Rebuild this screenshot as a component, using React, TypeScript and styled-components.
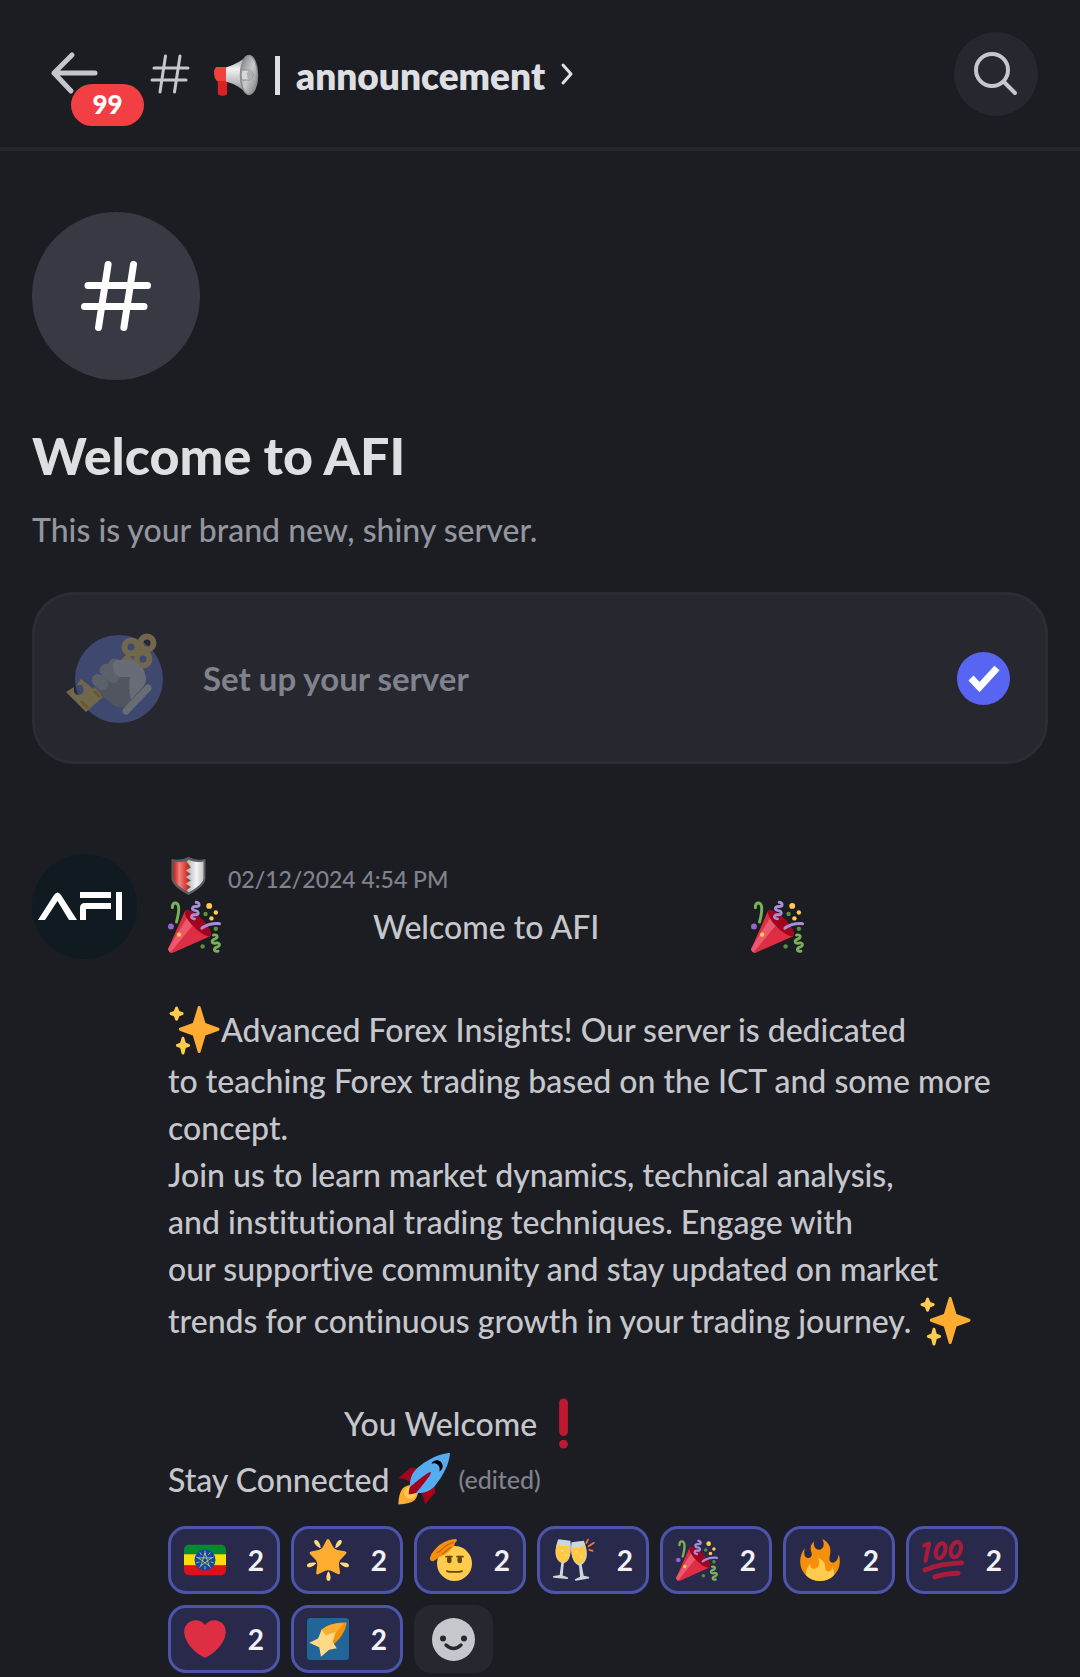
import React from "react";
import styled, { createGlobalStyle } from "styled-components";

const color = {
  page: "#1c1d22",
  raised: "#27282f",
  line: "#25262c",
  strong: "#dedfe3",
  text: "#c6c7cd",
  muted: "#80828e",
  sub: "#93959f",
};

const GlobalStyle = createGlobalStyle`
  *, *::before, *::after { box-sizing: border-box; }
  body {
    margin: 0;
    background: ${color.page};
    color: ${color.text};
    font-family: Lato, "Noto Sans", sans-serif;
    font-weight: 500;
    font-variant-ligatures: none;
  }
  button { font: inherit; font-variant-ligatures: none; color: inherit; border: 0; padding: 0; background: none; cursor: pointer; }
  h1, p { margin: 0; }
  svg { display: block; flex: none; overflow: visible; }
`;

const TopBar = styled.header`
  display: flex;
  align-items: center;
  height: 151px;
  padding: 0 42px 0 48px;
  border-bottom: 4px solid ${color.line};
`;

const BackButton = styled.button`
  position: relative;
  width: 52px;
  height: 44px;
`;

const Badge = styled.span`
  position: absolute;
  left: 23px;
  top: 32px;
  width: 73px;
  height: 42px;
  border-radius: 21px;
  background: #f23f43;
  color: #fff;
  font-size: 26px;
  font-weight: 900;
  line-height: 40px;
  text-align: center;
`;

const ChannelButton = styled.button`
  display: flex;
  align-items: center;
  margin-left: 50px;
  color: ${color.strong};
`;

const ChannelName = styled.span`
  display: flex;
  align-items: center;
  gap: 16px;
  margin: 4px 16px 0 24px;
  font-size: 37px;
  font-weight: 800;
  line-height: 48px;
`;

const Divider = styled.span`
  width: 5px;
  height: 39px;
  background: ${color.strong};
`;

const SearchButton = styled.button`
  display: grid;
  place-items: center;
  width: 84px;
  height: 84px;
  margin-left: auto;
  border-radius: 50%;
  background: ${color.raised};
`;

const Content = styled.main`
  padding: 61px 32px 4px;
`;

const ChannelMark = styled.div`
  display: grid;
  place-items: center;
  width: 168px;
  height: 168px;
  border-radius: 50%;
  background: #383a43;
`;

const Title = styled.h1`
  margin-top: 45px;
  color: ${color.strong};
  font-size: 52px;
  font-weight: 900;
  line-height: 60px;
`;

const Subtitle = styled.p`
  margin-top: 25px;
  color: ${color.sub};
  font-size: 32px;
  line-height: 40px;
`;

const SetupCard = styled.button`
  display: flex;
  align-items: center;
  width: 100%;
  height: 172px;
  margin-top: 42px;
  padding: 0 35px 0 31px;
  border: 3px solid #2c2d33;
  border-radius: 42px;
  background: ${color.raised};
  color: ${color.muted};
  font-size: 33px;
  font-weight: 700;
  text-align: left;
`;

const SetupLabel = styled.span`
  flex: 1;
  margin-left: 40px;
`;

const Message = styled.article`
  display: flex;
  gap: 31px;
  margin-top: 90px;
`;

const Avatar = styled.div`
  flex: none;
  display: grid;
  place-items: center;
  width: 105px;
  height: 105px;
  border-radius: 50%;
  background: #101a21;
`;

const MessageBody = styled.div`
  flex: 1;
  min-width: 0;
`;

const Meta = styled.div`
  display: flex;
  align-items: center;
  gap: 22px;
  height: 44px;
  padding-left: 3px;
`;

const Stamp = styled.time`
  padding-top: 6px;
  color: ${color.muted};
  font-size: 23px;
  line-height: 36px;
`;

const Line = styled.p<{ $tall?: boolean; $gap?: number; $indent?: number }>`
  display: flex;
  align-items: center;
  gap: ${(p) => p.$gap ?? 0}px;
  min-height: ${(p) => (p.$tall ? 56 : 47)}px;
  padding-left: ${(p) => p.$indent ?? 0}px;
  font-size: 32px;
  line-height: 47px;
`;

const Edited = styled.small`
  color: ${color.muted};
  font-size: 25px;
`;

const Reactions = styled.div`
  display: flex;
  flex-wrap: wrap;
  gap: 11px;
  margin-top: 19px;
`;

const Reaction = styled.button`
  display: flex;
  align-items: center;
  justify-content: space-between;
  width: 112px;
  height: 68px;
  padding: 0 13px;
  border: 3px solid #4c54ac;
  border-radius: 18px;
  background: #292a4b;
  color: #f1f1f6;
  font-size: 28px;
  font-weight: 700;
`;

const AddReaction = styled.button`
  display: grid;
  place-items: center;
  width: 79px;
  height: 68px;
  border-radius: 18px;
  background: ${color.raised};
`;

type EmojiProps = { size: number; label: string; children: React.ReactNode };
const Emoji = ({ size, label, children }: EmojiProps) => (
  <svg width={size} height={size} viewBox="0 0 36 36" role="img" aria-label={label}>
    {children}
  </svg>
);

type Sized = { size?: number };

const Party = ({ size = 53 }: Sized) => (
  <Emoji size={size} label="party popper">
    <path fill="#DD2E44" d="M11.626 7.488c-.112.112-.197.247-.268.395l-.008-.008L.134 33.141l.011.011c-.208.403.14 1.223.853 1.937.713.713 1.533 1.061 1.936.853l.01.01L28.21 24.735l-.008-.009c.147-.07.282-.155.395-.269 1.562-1.562-.971-6.627-5.656-11.313-4.687-4.686-9.752-7.218-11.315-5.656z" />
    <path fill="#EA596E" d="M13 12L.416 32.506l-.282.635.011.011c-.208.403.14 1.223.853 1.937.232.232.473.408.709.557L17 17l-4-5z" />
    <path fill="#A0041E" d="M23.012 13.066c4.67 4.672 7.263 9.652 5.789 11.124-1.473 1.474-6.453-1.118-11.126-5.788-4.671-4.672-7.263-9.654-5.79-11.127 1.474-1.473 6.454 1.119 11.127 5.791z" />
    <path fill="#AA8DD8" d="M18.59 13.609c-.199.161-.459.245-.734.215-.868-.094-1.598-.396-2.109-.873-.541-.505-.808-1.183-.735-1.862.128-1.192 1.324-2.286 3.363-2.066.793.085 1.147-.17 1.159-.292.014-.121-.277-.446-1.07-.532-.868-.094-1.598-.396-2.11-.873-.541-.505-.809-1.183-.735-1.862.13-1.192 1.325-2.286 3.362-2.065.578.062.883-.057 1.012-.134.103-.063.144-.123.148-.158.012-.121-.275-.446-1.07-.532-.549-.06-.947-.552-.886-1.102.059-.549.55-.946 1.101-.886 2.037.219 2.973 1.542 2.844 2.735-.13 1.194-1.325 2.286-3.364 2.067-.578-.063-.88.057-1.01.134-.103.062-.145.123-.149.157-.013.122.276.446 1.071.532 2.037.22 2.973 1.542 2.844 2.735-.129 1.192-1.324 2.286-3.362 2.065-.578-.062-.882.058-1.012.134-.104.064-.144.124-.148.158-.013.121.276.446 1.07.532.548.06.947.553.886 1.102-.028.274-.167.511-.366.671z" />
    <path fill="#77B255" d="M30.661 22.857c1.973-.557 3.334.323 3.658 1.478.324 1.154-.378 2.615-2.35 3.17-.77.216-1.001.584-.97.701.034.118.425.312 1.193.095 1.972-.555 3.333.325 3.657 1.479.326 1.155-.378 2.614-2.351 3.17-.769.216-1.001.585-.967.702.033.117.423.311 1.192.095.53-.149 1.084.16 1.233.691.148.532-.161 1.084-.693 1.234-1.971.555-3.333-.323-3.659-1.479-.324-1.154.379-2.613 2.353-3.169.77-.217 1.001-.584.967-.702-.032-.117-.422-.312-1.19-.096-1.974.556-3.334-.322-3.659-1.479-.325-1.154.378-2.613 2.351-3.17.768-.215.999-.585.967-.701-.034-.118-.423-.312-1.192-.096-.532.15-1.083-.16-1.233-.691-.149-.53.161-1.082.693-1.232z" />
    <path fill="#AA8DD8" d="M23.001 20.16c-.294 0-.584-.129-.782-.375-.345-.432-.274-1.061.156-1.406.218-.175 5.418-4.259 12.767-3.208.547.078.927.584.849 1.131-.078.546-.58.93-1.132.848-6.493-.922-11.187 2.754-11.233 2.791-.186.148-.406.219-.625.219z" />
    <path fill="#77B255" d="M5.754 16c-.095 0-.192-.014-.288-.042-.529-.159-.829-.716-.67-1.245 1.133-3.773 2.16-9.794.898-11.364-.141-.178-.354-.353-.842-.316-.938.072-.849 2.051-.848 2.071.042.551-.372 1.031-.922 1.072-.559.034-1.031-.372-1.072-.923-.103-1.379.326-4.035 2.692-4.214 1.056-.08 1.933.287 2.552 1.057 2.371 2.951-.036 11.506-.542 13.192-.13.433-.528.712-.958.712z" />
    <g fill="#5C913B">
      <circle cx="25.5" cy="9.5" r="1.5" />
      <circle cx="32.5" cy="19.5" r="1.5" />
      <circle cx="23.5" cy="31.5" r="1.5" />
    </g>
    <circle fill="#9266CC" cx="2" cy="18" r="2" />
    <g fill="#FFCC4D">
      <circle cx="28" cy="4" r="2" />
      <circle cx="32.5" cy="8.5" r="1.5" />
      <circle cx="29.5" cy="12.5" r="1.5" />
      <circle cx="7.5" cy="23.5" r="1.5" />
    </g>
  </Emoji>
);

const Sparkles = () => (
  <Emoji size={53} label="sparkles">
    <path fill="#FFAC33" d="M34.347 16.893l-8.899-3.294-3.323-10.891c-.128-.42-.517-.708-.956-.708-.439 0-.828.288-.956.708l-3.322 10.891-8.9 3.294c-.393.146-.653.519-.653.938 0 .418.26.793.653.938l8.895 3.293 3.324 11.223c.126.424.516.715.959.715.442 0 .833-.291.959-.716l3.324-11.223 8.896-3.293c.391-.144.652-.518.652-.937 0-.418-.261-.792-.653-.938z" />
    <path fill="#FFCC4D" d="M14.347 27.894l-2.314-.856-.9-3.3c-.118-.436-.513-.738-.964-.738-.451 0-.846.302-.965.737l-.9 3.3-2.313.856c-.393.145-.653.52-.653.938 0 .418.26.793.653.938l2.301.853.907 3.622c.112.444.511.756.97.756.459 0 .858-.312.97-.757l.907-3.622 2.301-.853c.393-.144.653-.519.653-.937 0-.418-.26-.793-.653-.937zM10.009 6.231l-2.364-.875-.876-2.365c-.145-.393-.519-.653-.938-.653-.418 0-.792.26-.938.653l-.875 2.365-2.365.875c-.393.146-.653.52-.653.938 0 .418.26.793.653.938l2.365.875.875 2.365c.146.393.52.653.938.653.418 0 .792-.26.938-.653l.875-2.365 2.365-.875c.393-.146.653-.52.653-.938 0-.418-.26-.792-.653-.938z" />
  </Emoji>
);

const Exclamation = () => (
  <Emoji size={53} label="exclamation mark">
    <g fill="#BE1931">
      <rect x="15" y="1" width="6" height="25.500" rx="3" />
      <circle cx="18" cy="32" r="3" />
    </g>
  </Emoji>
);

const Rocket = () => (
  <Emoji size={53} label="rocket">
    <path fill="#A0041E" d="M1 17l8-7 16 1 1 16-7 8s.001-5.999-6-12-12-6-12-6z" />
    <path fill="#FFAC33" d="M.973 35s-.036-7.979 2.985-11S15 21.187 15 21.187 14.999 29 11.999 32c-3 3-11.026 3-11.026 3z" />
    <circle fill="#FFCC4D" cx="8.999" cy="27" r="4" />
    <path fill="#55ACEE" d="M35.999 0s-10 0-22 10c-6 5-6 14-4 16s11 2 16-4c10-12 10-22 10-22z" />
    <path d="M26.999 5c-1.623 0-3.013.971-3.641 2.36.502-.227 1.055-.36 1.641-.36 2.209 0 4 1.791 4 4 0 .586-.133 1.139-.359 1.640 1.389-.627 2.359-2.017 2.359-3.640 0-2.209-1.791-4-4-4z" />
    <path fill="#A0041E" d="M8 28s0-4 1-5 13.001-10.999 14-10-9.001 13-10.001 14S8 28 8 28z" />
  </Emoji>
);

const EthiopiaFlag = () => (
  <Emoji size={42} label="flag of Ethiopia">
    <path fill="#078930" d="M4 5h28a4 4 0 0 1 4 4v4.500H0V9a4 4 0 0 1 4-4z" />
    <path fill="#FCDD09" d="M0 13h36v10H0z" />
    <path fill="#DA121A" d="M0 22.500h36V27a4 4 0 0 1-4 4H4a4 4 0 0 1-4-4z" />
    <circle fill="#0F47AF" cx="18" cy="18" r="9" />
    <g fill="none" stroke="#d3cf5c" strokeWidth=".7">
      <path d="M18 12l3.500 10.900-9.300-6.700h11.600l-9.300 6.700z" />
      <path d="M18 10v3M25.500 15.500l-2.600.9M22.700 24.500l-1.600-2.200M13.300 24.500l1.600-2.200M10.500 15.500l2.600.9M22.500 11.500l-1.700 2.300M13.500 11.500l1.700 2.300M25.500 20.500l-2.700-.9M10.500 20.500l2.700-.9M18 26v-2.800" />
    </g>
  </Emoji>
);

const GlowingStar = () => (
  <Emoji size={42} label="glowing star">
    <path fill="#FFAC33" d="M28.840 17.638c-.987 1.044-1.633 3.067-1.438 4.493l.892 6.441c.197 1.427-.701 2.087-1.996 1.469l-5.851-2.796c-1.295-.62-3.408-.611-4.700.018l-5.826 2.842c-1.291.629-2.193-.026-2.007-1.452l.843-6.449c.186-1.427-.475-3.444-1.470-4.481l-4.494-4.688c-.996-1.037-.655-2.102.755-2.365l6.370-1.188c1.410-.263 3.116-1.518 3.793-2.789L16.762.956c.675-1.271 1.789-1.274 2.473-.009L22.330 6.660c.686 1.265 2.400 2.507 3.814 2.758l6.378 1.141c1.412.252 1.761 1.314.774 2.359l-4.456 4.720z" />
    <path fill="#FFD983" d="M9.783 2.181c1.023 1.413 2.446 4.917 1.717 5.447-.728.531-3.607-1.910-4.630-3.323-1.022-1.413-.935-2.668-.131-3.254.804-.587 2.020-.282 3.044 1.130zm19.348 2.124C28.109 5.718 25.230 8.160 24.500 7.627c-.729-.530.695-4.033 1.719-5.445C27.242.768 28.457.463 29.262 1.051c.803.586.890 1.841-.131 3.254zM16.625 33.291c-.001-1.746.898-5.421 1.801-5.421.897 0 1.798 3.675 1.797 5.420 0 1.747-.804 2.712-1.800 2.710-.994.002-1.798-.962-1.798-2.709zm16.179-9.262c-1.655-.539-4.858-2.533-4.579-3.395.277-.858 4.037-.581 5.690-.041 1.655.540 2.321 1.605 2.013 2.556-.308.950-1.469 1.420-3.124.880zM2.083 20.594c1.655-.540 5.414-.817 5.694.044.276.857-2.928 2.854-4.581 3.392-1.654.540-2.818.070-3.123-.880-.308-.950.354-2.015 2.010-2.556z" />
  </Emoji>
);

const Salute = () => (
  <Emoji size={42} label="saluting face">
    <circle fill="#FFCC4D" cx="21" cy="21" r="15" />
    <path fill="#F4900C" d="M0 16c1-4 4-7 7-10 3-2.500 9-6 15-6 1.300 0 1.500 1.600.3 2.300L21 4c.7 1-1 2.500-3 4.500-3 3.500-6 5-9 6.500-2 1-4 3-6 4-2 .5-3.500-1-3-3z" />
    <path fill="none" stroke="#C4630A" strokeWidth="1" d="M20 3c-4 1-7 3-9 5-1.500 2-3 3-5 3.500M18 7c-3 1.500-5 4-7.500 6" strokeLinecap="round" />
    <g fill="#664500">
      <ellipse cx="16.500" cy="18" rx="2" ry="2.800" />
      <ellipse cx="25.500" cy="18" rx="2" ry="2.800" />
    </g>
    <path fill="none" stroke="#664500" strokeWidth="1.500" strokeLinecap="round" d="M13.800 15.200h5M23.200 15.200h5M14.500 27.500q1 .7 2.500.7h8q1.500 0 2.500-.7" />
  </Emoji>
);

const Glasses = () => (
  <Emoji size={42} label="clinking glasses">
    <g fill="#CCD6DD">
      <path d="M4.500.2l10.400 1.200c1 9 .500 17-5.600 19.400l-1 10.500 4.300 1.500c.6.300.4 1.500-.4 1.400L.5 33.200c-.8-.2-.7-1.200 0-1.400l5.200-1 1.400-10.200C.8 17.200 1.200 9 4.500.2z" />
      <path d="M15.900 2.800l10.500-1.300c3.300 8 4.400 16.500-1.800 20.500l1.700 9.500 4.200.9c.8.200.8 1.300 0 1.500l-10.800 1.900c-1 .1-1.200-1.100-.5-1.500l4-2-.9-9.400c-5.600-2.300-7.800-10.900-6.400-20.100z" />
    </g>
    <path fill="#FFC845" d="M3.200 5c3.200 1.200 6.500 1.300 11.200.6.800 8-.5 13.700-5.900 14.600C2.400 19 1.400 12 3.200 5z" />
    <path fill="#FFC845" d="M16.300 6.800c3.800.7 7.900.3 10.900-1.400 2.100 7.800 1 14.600-4.500 16.200-5.200-.4-7.200-7.200-6.400-14.800z" />
    <g fill="#FFE8B6">
      <circle cx="8" cy="10" r=".8" />
      <circle cx="11" cy="14" r=".8" />
      <circle cx="20" cy="11" r=".8" />
      <circle cx="24" cy="15" r=".8" />
    </g>
    <path fill="none" stroke="#F4743B" strokeWidth="1.500" strokeLinecap="round" d="M28.500 3.500L30 .5M30.500 6.300l4.500-3M31 9.300l3 .8" />
  </Emoji>
);

const Fire = () => (
  <Emoji size={42} label="fire">
    <path fill="#F4900C" d="M35 19c0-2.062-.367-4.039-1.040-5.868-.460 5.389-3.333 8.157-6.335 6.868-2.812-1.208-.917-5.917-.777-8.164.236-3.809-.012-8.169-6.931-11.794 2.875 5.500.333 8.917-2.333 9.125-2.958.231-5.667-2.542-4.667-7.042-3.238 2.386-3.332 6.402-2.333 9 1.042 2.708-.042 4.958-2.583 5.208-2.840.280-4.418-3.041-2.963-8.333C2.520 10.965 1 14.805 1 19c0 9.389 7.611 17 17 17s17-7.611 17-17z" />
    <path fill="#FFCC4D" d="M28.394 23.999c.148 3.084-2.561 4.293-4.019 3.709-2.106-.843-1.541-2.291-2.083-5.291s-2.625-5.083-5.708-6c2.250 6.333-1.247 8.667-3.080 9.084-1.872.426-3.753-.001-3.968-4.007C7.352 23.668 6 26.676 6 30c0 .368.023.730.055 1.090C9.125 34.124 13.342 36 18 36s8.875-1.876 11.945-4.910c.032-.360.055-.722.055-1.090 0-2.187-.584-4.236-1.606-6.001z" />
  </Emoji>
);

const Hundred = () => (
  <Emoji size={42} label="hundred points">
    <g fill="none" stroke="#A81C3A" strokeLinecap="round" strokeLinejoin="round">
      <path strokeWidth="3.600" d="M2 5.500L6 4 3 18.500" />
      <ellipse strokeWidth="3.500" cx="16" cy="10" rx="3.800" ry="6.600" transform="rotate(18 16 10)" />
      <ellipse strokeWidth="3.500" cx="29" cy="9" rx="4.200" ry="6.800" transform="rotate(18 29 9)" />
      <path strokeWidth="4.200" d="M2.500 26.500Q16 21 34 20.500M11 32.500Q20 29.500 31 29.300" />
    </g>
  </Emoji>
);

const Heart = () => (
  <Emoji size={42} label="heart">
    <path fill="#DD2E44" d="M35.885 11.833c0-5.450-4.418-9.868-9.867-9.868-3.308 0-6.227 1.633-8.018 4.129-1.791-2.496-4.710-4.129-8.017-4.129-5.450 0-9.868 4.417-9.868 9.868 0 .772.098 1.520.266 2.241C1.751 22.587 11.216 31.568 18 34.034c6.783-2.466 16.249-11.447 17.617-19.959.170-.721.268-1.469.268-2.242z" />
  </Emoji>
);

const ShootingStar = () => (
  <Emoji size={42} label="shooting star">
    <rect fill="#226699" width="36" height="36" rx="3" />
    <path fill="#F4900C" d="M34 4c-10-.4-17 2-22 6.500l10 13 2-2C29 17 33 11 34 4z" />
    <path fill="#FFAC33" d="M32 4.500C24 4.500 17 6 12 10.500l8 7C25 13 28 9 32 4.500z" />
    <path fill="#FFD983" d="M12.500 10l3.700 4.700 8.300-2.500-2.500 8.300 3.500 5.500-6.500 1.300-7 6-1.500-8.300-8.500-3.700 7.500-3.800z" />
  </Emoji>
);

const Megaphone = () => (
  <svg width="45" height="41" viewBox="0 0 45 41" role="img" aria-label="loudspeaker">
    <defs>
      <linearGradient id="cone" x1="0" y1="0" x2="0" y2="1">
        <stop offset="0" stopColor="#8d8f91" />
        <stop offset=".35" stopColor="#f2f2f2" />
        <stop offset=".7" stopColor="#b9babb" />
        <stop offset="1" stopColor="#6f7173" />
      </linearGradient>
      <linearGradient id="bell" x1="0" y1="0" x2="1" y2="1">
        <stop offset="0" stopColor="#75787a" />
        <stop offset=".5" stopColor="#c9cacb" />
        <stop offset="1" stopColor="#77797b" />
      </linearGradient>
    </defs>
    <path fill="#d92323" d="M3.500 20h10l-.5 19.500q-4 2.500-9 0z" />
    <path fill="#f0413c" d="M2 12h12v14H3q-3-3-3-8 0-4 2-6z" />
    <path fill="url(#cone)" d="M12 12.500Q26 8 34 0v40Q25 30 12 26.500z" />
    <ellipse cx="35" cy="20" rx="8.500" ry="19.500" fill="url(#bell)" stroke="#8b8d8f" strokeWidth="1.500" />
    <path fill="#d7d8d9" d="M28 15h7a4 5 0 0 1 0 10h-7q-2-5 0-10z" stroke="#8a8c8e" />
    <ellipse cx="36" cy="20" rx="3" ry="5" fill="#aeb0b2" />
  </svg>
);

const Shield = () => (
  <svg width="35" height="38" viewBox="0 0 35 38" role="img" aria-label="shield">
    <defs>
      <linearGradient id="shieldRed">
        <stop offset="0" stopColor="#c51d13" />
        <stop offset=".4" stopColor="#f08078" />
        <stop offset="1" stopColor="#cf2116" />
      </linearGradient>
      <linearGradient id="shieldSilver">
        <stop offset="0" stopColor="#a7a7a7" />
        <stop offset=".6" stopColor="#f4f4f4" />
        <stop offset="1" stopColor="#c4c4c4" />
      </linearGradient>
    </defs>
    <path fill="#5c5e61" d="M.5 2Q10 4 17.500 0 25 4 34.500 2v19q0 8-17 17Q.5 29 .5 21z" />
    <path fill="url(#shieldRed)" d="M2.500 4.500Q10 6 17.500 4v31Q2.500 27 2.500 21z" />
    <path fill="url(#shieldSilver)" d="M15.500 4.500L17.500 3Q25 6 32.500 4.500V21q0 6-15 14.500l-2-2.500 4.500-3-5.500-3.500 5.500-3-5.500-3.500 5.500-3-5.500-3.500 5.500-3z" />
  </svg>
);

const SetupArt = () => (
  <svg width="97" height="90" viewBox="0 0 97 90" aria-hidden="true">
    <circle cx="53" cy="46" r="44" fill="#3f486f" />
    <path stroke="#70674c" strokeWidth="10" d="M65 24L29 61" />
    <path fill="#70674c" d="M0 59l8-5q-1 8 5 8 7-2 3-10-3-1-6 1l5-7 22 18-17 15z" />
    <path stroke="#6b572f" strokeWidth="3" d="M15 68l7 7M28 58l6 6" />
    <g fill="none" stroke="#70674c" strokeWidth="6">
      <circle cx="65" cy="14" r="6.500" />
      <circle cx="81" cy="10" r="6.500" />
      <circle cx="77" cy="26" r="6.500" />
    </g>
    <path fill="#50555f" d="M28 54l16-24h24l9 14-12 26q-8 7-16 3-8-5-21-19z" />
    <g fill="#5c606b">
      <rect x="25" y="43" width="18" height="12" rx="6" transform="rotate(42 34 49)" />
      <rect x="33" y="34" width="22" height="13" rx="6" transform="rotate(42 44 40)" />
      <rect x="42" y="28" width="24" height="13" rx="6" transform="rotate(25 54 34)" />
    </g>
    <path fill="#686c74" d="M47 32q0-5 7-5h13q12 6 13 18 0 6-3 9l-12 13q-3-13-1-23H54q-7-3-7-12z" />
    <path stroke="#686c74" strokeWidth="7" strokeLinecap="round" d="M60 78l22-23" />
  </svg>
);

const Hash = ({ size, stroke, tint }: { size: number; stroke: number; tint: string }) => (
  <svg width={size} height={size} viewBox="0 0 40 40" fill="none" stroke={tint} strokeWidth={stroke} strokeLinecap="round" aria-hidden="true">
    <path d="M15.500 2L10 38M30 2l-5.500 36M4 14h34M2 26h34" />
  </svg>
);

const reactions = [EthiopiaFlag, GlowingStar, Salute, Glasses, Party, Fire, Hundred, Heart, ShootingStar];

export default function App() {
  return (
    <>
      <GlobalStyle />
      <TopBar>
        <BackButton aria-label="Back, 99 unread">
          <svg width="52" height="44" viewBox="0 0 52 44" fill="none" stroke={color.text} strokeWidth="5" strokeLinecap="round" strokeLinejoin="round" aria-hidden="true">
            <path d="M47 21H6M24 3L6 21l17 18" />
          </svg>
          <Badge>99</Badge>
        </BackButton>
        <ChannelButton>
          <Hash size={40} stroke={3} tint={color.text} />
          <ChannelName>
            <Megaphone />
            <Divider />
            announcement
          </ChannelName>
          <svg width="12" height="22" viewBox="0 0 12 22" fill="none" stroke={color.strong} strokeWidth="3" strokeLinecap="round" strokeLinejoin="round" aria-hidden="true">
            <path d="M2 2l8 9-8 9" />
          </svg>
        </ChannelButton>
        <SearchButton aria-label="Search">
          <svg width="44" height="44" viewBox="0 0 44 44" fill="none" stroke={color.text} strokeWidth="4" strokeLinecap="round" aria-hidden="true">
            <circle cx="18" cy="18" r="16" />
            <path d="M30 30l11 11" />
          </svg>
        </SearchButton>
      </TopBar>
      <Content>
        <ChannelMark>
          <Hash size={70} stroke={4} tint="#fff" />
        </ChannelMark>
        <Title>Welcome to AFI</Title>
        <Subtitle>This is your brand new, shiny server.</Subtitle>
        <SetupCard>
          <SetupArt />
          <SetupLabel>Set up your server</SetupLabel>
          <svg width="53" height="53" viewBox="0 0 53 53" role="img" aria-label="Done">
            <circle cx="26.500" cy="26.500" r="26.500" fill="#5865f2" />
            <path d="M14 26l8.500 9L40 16" fill="none" stroke="#fff" strokeWidth="7" />
          </svg>
        </SetupCard>
        <Message>
          <Avatar>
            <svg width="105" height="105" viewBox="0 0 105 105" role="img" aria-label="AFI">
              <path fill="#fff" d="M6 66L22 41q3.500-5 7 0l16 25h-8L25.500 47 13 66z" />
              <path d="M48 41h31M51 66V54q0-2 2-2h26M87 38v28" fill="none" stroke="#fff" strokeWidth="6" />
            </svg>
          </Avatar>
          <MessageBody>
            <Meta>
              <Shield />
              <Stamp dateTime="2024-12-02T16:54">02/12/2024 4:54 PM</Stamp>
            </Meta>
            <Line $tall $gap={152}>
              <Party />
              Welcome to AFI
              <Party />
            </Line>
            <Line />
            <Line $tall>
              <Sparkles />
              Advanced Forex Insights! Our server is dedicated
            </Line>
            <Line>to teaching Forex trading based on the ICT and some more</Line>
            <Line>concept.</Line>
            <Line>Join us to learn market dynamics, technical analysis,</Line>
            <Line>and institutional trading techniques. Engage with</Line>
            <Line>our supportive community and stay updated on market</Line>
            <Line $tall $gap={8}>
              trends for continuous growth in your trading journey.
              <Sparkles />
            </Line>
            <Line />
            <Line $tall $indent={176}>
              You Welcome
              <Exclamation />
            </Line>
            <Line $tall $gap={8}>
              Stay Connected
              <Rocket />
              <Edited>(edited)</Edited>
            </Line>
            <Reactions>
              {reactions.map((Icon, i) => (
                <Reaction key={i}>
                  <Icon size={42} />
                  <span>2</span>
                </Reaction>
              ))}
              <AddReaction aria-label="Add reaction">
                <svg width="43" height="43" viewBox="0 0 43 43" aria-hidden="true">
                  <circle cx="21.500" cy="21.500" r="21.500" fill={color.text} />
                  <circle cx="11" cy="20.500" r="3" fill={color.raised} />
                  <circle cx="32" cy="20.500" r="3" fill={color.raised} />
                  <path d="M14 27q7.500 7 15 0" fill="none" stroke={color.raised} strokeWidth="3.500" strokeLinecap="round" />
                </svg>
              </AddReaction>
            </Reactions>
          </MessageBody>
        </Message>
      </Content>
    </>
  );
}
